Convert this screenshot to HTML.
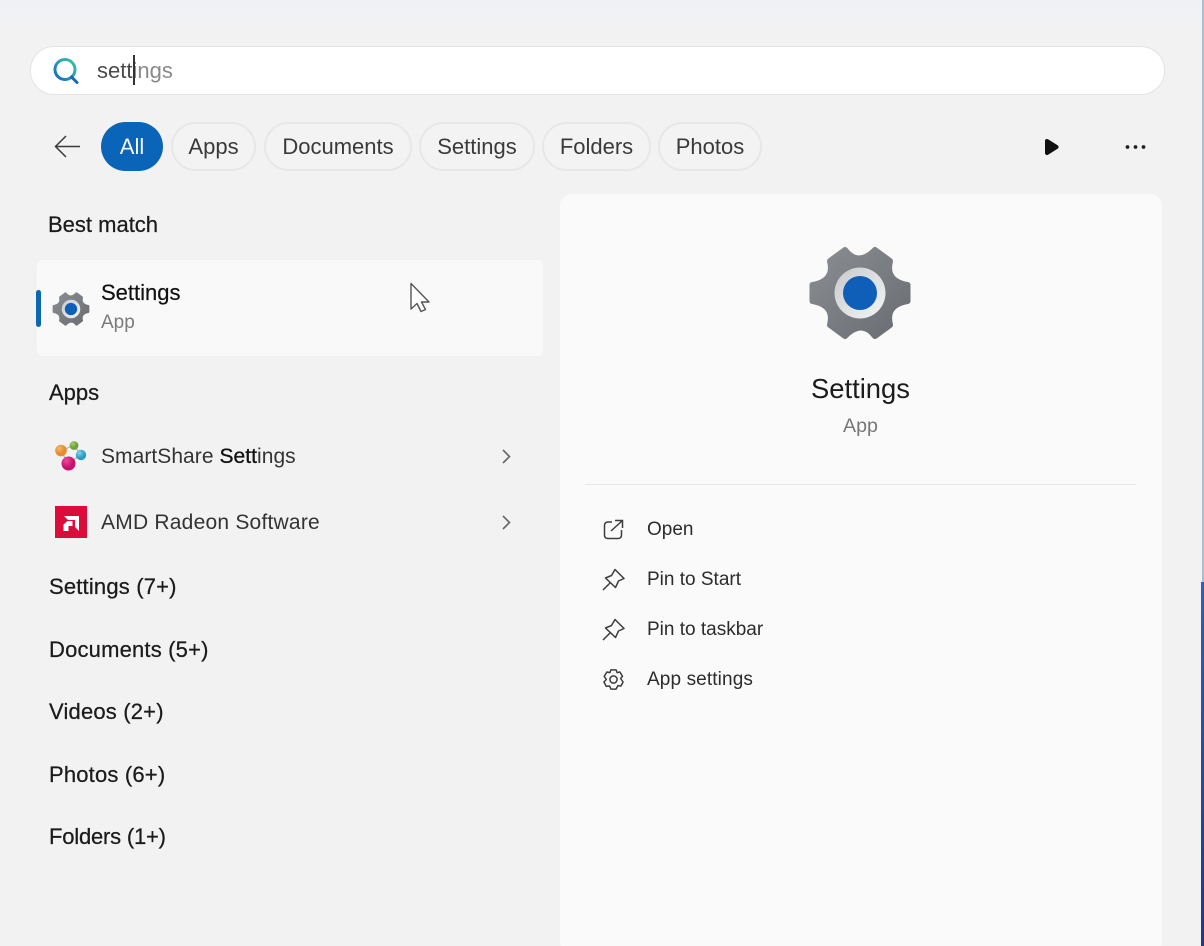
<!DOCTYPE html>
<html lang="en">
<head>
<meta charset="utf-8">
<title>Search</title>
<style>
html,body{margin:0;padding:0;width:1204px;height:946px;overflow:hidden;background:#f2f2f3}
body{position:relative;font-family:"Liberation Sans",sans-serif;color:#1b1b1b}
.a{position:absolute;white-space:nowrap}
.t{position:absolute;white-space:nowrap;line-height:30px;height:30px}
.h{font-size:22px;-webkit-text-stroke:.25px #1b1b1b}
.s{letter-spacing:.18px}
.chip{position:absolute;top:122px;height:45px;line-height:45px;border:2px solid #e7e7e8;border-radius:25px;text-align:center;font-size:22px;color:#3a3a3a;background:#f3f3f4}
.act{font-size:19px;color:#2c2c2c}
svg{position:absolute;overflow:visible}
</style>
</head>
<body>
<div class="a" style="left:0;top:0;width:1204px;height:30px;background:linear-gradient(#eff1f4,#f2f2f3)"></div>
<div class="a" style="left:1202px;top:0;width:2px;height:582px;background:#a8c0d6"></div>
<div class="a" style="left:1201px;top:582px;width:3px;height:364px;background:linear-gradient(#2c62b8,#1d3a80)"></div>

<!-- search box -->
<div class="a" style="left:30px;top:46px;width:1133px;height:47px;background:#fff;border:1px solid #e3e3e3;border-radius:24px"></div>
<svg style="left:0;top:0" width="1204" height="946">
  <defs>
    <linearGradient id="sg" x1="1" y1="0" x2="0" y2="1">
      <stop offset="0" stop-color="#3fc29a"/><stop offset=".45" stop-color="#2a9fc4"/><stop offset="1" stop-color="#1468b4"/>
    </linearGradient>
    <linearGradient id="gg" x1="0" y1="0" x2="1" y2="1">
      <stop offset="0" stop-color="#8a8d91"/><stop offset="1" stop-color="#696d72"/>
    </linearGradient>
    <linearGradient id="rg" x1="0" y1="0" x2="1" y2="1">
      <stop offset="0" stop-color="#c8c9cb"/><stop offset="1" stop-color="#f4f5f6"/>
    </linearGradient>
    <symbol id="gear" viewBox="-55 -55 110 110" overflow="visible">
      <path fill="url(#gg)" stroke="url(#gg)" stroke-width="6" stroke-linejoin="round"
        d="M47.5 -8L47.5 8Q25 12 30 32L15 43Q2 26 -15 43L-30 32Q-25 12 -47.5 8L-47.5 -8Q-25 -12 -30 -32L-15 -43Q-2 -26 15 -43L30 -32Q25 -12 47.5 -8Z"/>
      <circle r="25.5" fill="url(#rg)"/>
      <circle r="17" fill="#0f5fb8"/>
    </symbol>
  </defs>
  <circle cx="65" cy="69.5" r="10" fill="none" stroke="url(#sg)" stroke-width="3"/>
  <path d="M71.5 77L77 82.5" stroke="#1468b4" stroke-width="3" stroke-linecap="round"/>
</svg>
<div class="t" style="left:97px;top:56px;font-size:22px;color:#4a4a4a">sett<span style="color:#8a8a8a">ings</span></div>
<div class="a" style="left:133px;top:55px;width:2px;height:30px;background:#333"></div>

<!-- filter row -->
<svg style="left:0;top:0" width="1204" height="946">
  <path d="M55.5 146.5H80M66 136L55.5 146.5L66 157" fill="none" stroke="#3a3a3a" stroke-width="1.5"/>
  <path d="M1047 141L1056.5 147L1047 153Z" fill="#111" stroke="#111" stroke-width="4" stroke-linejoin="round"/>
  <circle cx="1127.5" cy="147" r="1.9" fill="#222"/><circle cx="1135.5" cy="147" r="1.9" fill="#222"/><circle cx="1143.5" cy="147" r="1.9" fill="#222"/>
</svg>
<div class="chip" style="left:101px;width:62px;height:49px;line-height:49px;border:0;background:#0a64b8;color:#f4f8fc">All</div>
<div class="chip" style="left:171px;width:81px">Apps</div>
<div class="chip" style="left:264px;width:144px">Documents</div>
<div class="chip" style="left:419px;width:112px">Settings</div>
<div class="chip" style="left:542px;width:105px">Folders</div>
<div class="chip" style="left:658px;width:100px">Photos</div>

<!-- left list -->
<div class="t h" style="left:48px;top:210px">Best match</div>
<div class="a" style="left:37px;top:260px;width:506px;height:96px;background:#f9f9f9;border-radius:6px"></div>
<div class="a" style="left:36px;top:290px;width:5px;height:37px;background:#0d68b4;border-radius:3px"></div>
<svg style="left:51px;top:289px" width="40" height="40"><use href="#gear" width="40" height="40"/></svg>
<div class="t" style="left:101px;top:278px;font-size:22px;-webkit-text-stroke:.2px #111;color:#111">Settings</div>
<div class="t" style="left:101px;top:308px;font-size:19px;color:#7b7b7b">App</div>

<div class="t h" style="left:49px;top:378px">Apps</div>

<svg style="left:0;top:0" width="1204" height="946">
  <defs>
    <radialGradient id="b1" cx=".35" cy=".3"><stop offset="0" stop-color="#f6b765"/><stop offset="1" stop-color="#e58a2e"/></radialGradient>
    <radialGradient id="b2" cx=".35" cy=".3"><stop offset="0" stop-color="#a4cc6a"/><stop offset="1" stop-color="#6da13c"/></radialGradient>
    <radialGradient id="b3" cx=".35" cy=".3"><stop offset="0" stop-color="#7fd4ea"/><stop offset="1" stop-color="#2c9cc4"/></radialGradient>
    <radialGradient id="b4" cx=".35" cy=".3"><stop offset="0" stop-color="#ef4a9c"/><stop offset="1" stop-color="#c4126e"/></radialGradient>
  </defs>
  <path d="M61 451L74 445M74 445L81 455M61 451L68 463M81 455L68 463" stroke="#b0b0b0" stroke-width="1.2" fill="none"/>
  <circle cx="61" cy="450.5" r="5.8" fill="url(#b1)"/>
  <circle cx="74" cy="445.5" r="4.4" fill="url(#b2)"/>
  <circle cx="81" cy="455" r="5.2" fill="url(#b3)"/>
  <circle cx="68.5" cy="463.5" r="7" fill="url(#b4)"/>
  <rect x="55" y="506" width="32" height="32" fill="#dc0b3a"/>
  <path d="M64 516H79V531L75 527V520H68Z" fill="#fff"/>
  <path d="M63.5 531V524.5L67.5 521H72.5V526H68.5L68.5 531Z" fill="#fff"/>
  <path d="M503 450L509.5 456.5L503 463" fill="none" stroke="#666" stroke-width="1.6"/>
  <path d="M503 516L509.5 522.5L503 529" fill="none" stroke="#666" stroke-width="1.6"/>
  <path d="M411 283.5V309L417 303.5L421 311.5L425.5 309.5L421.5 302H429Z" fill="#fdfdfd" stroke="#555" stroke-width="1.4" stroke-linejoin="round"/>
</svg>
<div class="t" style="left:101px;top:442px;font-size:21px;letter-spacing:.05px;color:#333">SmartShare <span style="-webkit-text-stroke:.3px #111;color:#111">Sett</span>ings</div>
<div class="t" style="left:101px;top:508px;font-size:21px;letter-spacing:.22px;color:#333">AMD Radeon Software</div>

<div class="t h s" style="left:49px;top:572px">Settings (7+)</div>
<div class="t h s" style="left:49px;top:635px">Documents (5+)</div>
<div class="t h s" style="left:49px;top:697px">Videos (2+)</div>
<div class="t h s" style="left:49px;top:760px">Photos (6+)</div>
<div class="t h" style="left:49px;top:822px;letter-spacing:-.2px">Folders (1+)</div>

<!-- right panel -->
<div class="a" style="left:560px;top:194px;width:602px;height:760px;background:#fafafa;border-radius:12px"></div>
<svg style="left:805px;top:238px" width="110" height="110"><use href="#gear" width="110" height="110"/></svg>
<div class="t" style="left:811px;top:374px;font-size:27.4px;color:#1c1c1c">Settings</div>
<div class="t" style="left:843px;top:411px;font-size:19.6px;color:#777">App</div>
<div class="a" style="left:585px;top:484px;width:551px;height:1px;background:#e6e6e6"></div>

<svg style="left:0;top:0" width="1204" height="946" fill="none" stroke="#3d3d3d" stroke-width="1.5">
  <path d="M612 522H608Q604.5 522 604.5 525.5V535Q604.5 538.5 608 538.5H618Q621.5 538.5 621.5 535V530"/>
  <path d="M611 531L622.5 520.5M615 520.5H622.5V528"/>
  <path stroke-linejoin="round" d="M603 590L610 583M615 569.5L624 578.5L618.5 581L615.5 587.5L605.5 578L611.5 575.5Z"/>
  <path stroke-linejoin="round" d="M603 640L610 633M615 619.5L624 628.5L618.5 631L615.5 637.5L605.5 628L611.5 625.5Z"/>
  <g transform="translate(613.5 679.5)">
    <circle r="3.6"/>
    <path stroke-linejoin="round" d="M-2.6 -9.6L2.6 -9.6L3.6 -6.9L6.4 -7.5L9 -3.2L7.1 -1L9.6 2.5L7.4 6.5L4.4 6.1L2.6 9.6L-2.6 9.6L-3.9 6.5L-7.2 6.9L-9.6 2.5L-7.2 0L-9.3 -3.2L-6.6 -7.5L-3.6 -6.9Z"/>
  </g>
</svg>
<div class="t act" style="left:647px;top:515px">Open</div>
<div class="t act" style="left:647px;top:565px">Pin to Start</div>
<div class="t act" style="left:647px;top:615px">Pin to taskbar</div>
<div class="t act" style="left:647px;top:665px;letter-spacing:.12px">App settings</div>
</body>
</html>
